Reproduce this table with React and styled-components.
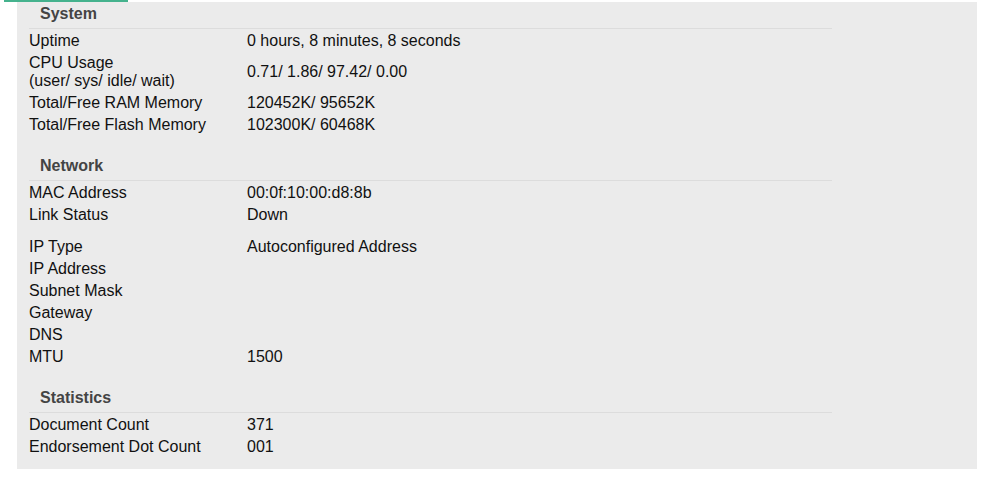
import React from "react";
import styled, { createGlobalStyle } from "styled-components";

const Global = createGlobalStyle`
  html, body { margin: 0; padding: 0; background: #ffffff; }
  body { font-family: "Liberation Sans", Arial, sans-serif; }
`;

const TabBar = styled.div`
  height: 2px;
  display: flex;
`;

const TabIndicator = styled.div`
  margin-left: 4px;
  width: 124px;
  height: 2px;
  background: #45b28d;
`;

const Panel = styled.div`
  margin-left: 17px;
  width: 960px;
  box-sizing: border-box;
  background: #ebebeb;
  padding: 0 0 12px 12px;
`;

const Section = styled.section`
  width: 803px;
  & + & {
    margin-top: 19px;
  }
`;

const Heading = styled.div`
  padding: 3px 0 5px 11px;
  line-height: 18px;
  font-size: 16px;
  font-weight: bold;
  color: #444444;
  border-bottom: 1px solid #dcdcdc;
`;

const Row = styled.div`
  display: grid;
  grid-template-columns: 218px 1fr;
  align-items: center;
  padding: 3px 0 1px;
  margin-top: ${(p) => (p.$gap ? "10px" : "0")};
  font-size: 16px;
  line-height: 18px;
  color: #111111;
`;

const Label = styled.div``;
const Value = styled.div``;

const sections = [
  {
    title: "System",
    rows: [
      ["Uptime", "0 hours, 8 minutes, 8 seconds"],
      [["CPU Usage", "(user/ sys/ idle/ wait)"], "0.71/ 1.86/ 97.42/ 0.00"],
      ["Total/Free RAM Memory", "120452K/ 95652K"],
      ["Total/Free Flash Memory", "102300K/ 60468K"],
    ],
  },
  {
    title: "Network",
    rows: [
      ["MAC Address", "00:0f:10:00:d8:8b"],
      ["Link Status", "Down"],
      ["IP Type", "Autoconfigured Address", true],
      ["IP Address", ""],
      ["Subnet Mask", ""],
      ["Gateway", ""],
      ["DNS", ""],
      ["MTU", "1500"],
    ],
  },
  {
    title: "Statistics",
    rows: [
      ["Document Count", "371"],
      ["Endorsement Dot Count", "001"],
    ],
  },
];

export default function App() {
  return (
    <>
      <Global />
      <TabBar>
        <TabIndicator />
      </TabBar>
      <Panel>
        {sections.map((s) => (
          <Section key={s.title}>
            <Heading>{s.title}</Heading>
            {s.rows.map(([label, value, gap], i) => (
              <Row key={i} $gap={gap}>
                <Label>
                  {Array.isArray(label)
                    ? label.map((l, j) => <div key={j}>{l}</div>)
                    : label}
                </Label>
                <Value>{value}</Value>
              </Row>
            ))}
          </Section>
        ))}
      </Panel>
    </>
  );
}
